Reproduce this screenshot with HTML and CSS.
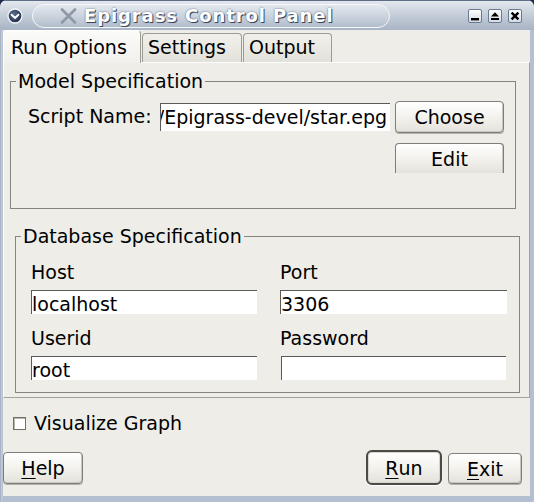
FILE: index.html
```html
<!DOCTYPE html>
<html>
<head>
<meta charset="utf-8">
<title>Epigrass Control Panel</title>
<link rel="stylesheet" href="styles.css">
</head>
<body>
<div class="window">
  <div class="titlebar">
    <span class="menu-btn">
      <svg width="16" height="16" viewBox="0 0 16 16">
        <defs>
          <radialGradient id="mb" cx="0.4" cy="0.35" r="0.7">
            <stop offset="0" stop-color="#5b6c8c"/>
            <stop offset="1" stop-color="#1d2a46"/>
          </radialGradient>
        </defs>
        <circle cx="8" cy="8" r="7" fill="url(#mb)" stroke="#f4f6fa" stroke-width="1.3"/>
        <path d="M4.6 6.8 L8 10 L11.4 6.8" fill="none" stroke="#fff" stroke-width="2" stroke-linecap="round" stroke-linejoin="round"/>
      </svg>
    </span>
    <div class="pill">
      <svg class="x-icon" width="17" height="16" viewBox="0 0 17 16">
        <path d="M2 1.5 L15 14.5 M15 1.5 L2 14.5" stroke="#8e98a6" stroke-width="2.6" stroke-linecap="round"/>
      </svg>
      <span class="title">Epigrass Control Panel</span>
    </div>
    <div class="wm-buttons">
      <span class="wm-btn"><svg width="12" height="12" viewBox="0 0 12 12"><rect x="2" y="8" width="8" height="2.4" fill="#000"/></svg></span>
      <span class="wm-btn"><svg width="12" height="12" viewBox="0 0 12 12"><path d="M6 2.2 L10 6.6 L2 6.6 Z" fill="#000"/><rect x="2" y="8" width="8" height="2" fill="#000"/></svg></span>
      <span class="wm-btn"><svg width="12" height="12" viewBox="0 0 12 12"><path d="M2.6 2.6 L9.4 9.4 M9.4 2.6 L2.6 9.4" stroke="#000" stroke-width="2.4"/></svg></span>
    </div>
  </div>

  <div class="client">
    <div class="tabs">
      <div class="tab active">Run Options</div>
      <div class="tab settings">Settings</div>
      <div class="tab output">Output</div>
    </div>

    <div class="page">
      <fieldset class="group model">
        <legend>Model Specification</legend>
        <div class="script-row">
          <span class="label script-label">Script Name:</span>
          <div class="entry script-entry"><span>/Epigrass-devel/star.epg</span></div>
          <div class="btn-col">
            <div class="btn choose">Choose</div>
            <div class="btn edit">Edit</div>
          </div>
        </div>
      </fieldset>

      <fieldset class="group db">
        <legend>Database Specification</legend>
        <div class="db-grid">
          <div class="field">
            <div class="label">Host</div>
            <div class="entry db-entry">localhost</div>
          </div>
          <div class="field">
            <div class="label">Port</div>
            <div class="entry db-entry">3306</div>
          </div>
          <div class="field">
            <div class="label">Userid</div>
            <div class="entry db-entry">root</div>
          </div>
          <div class="field">
            <div class="label">Password</div>
            <div class="entry db-entry"></div>
          </div>
        </div>
      </fieldset>
    </div>

    <div class="check-row">
      <span class="checkbox"></span>
      <span class="check-label">Visualize Graph</span>
    </div>

    <div class="button-row">
      <div class="btn help"><span class="ul">H</span>elp</div>
      <div class="spacer"></div>
      <div class="btn run"><span class="ul">R</span>un</div>
      <div class="btn exit"><span class="ul">E</span>xit</div>
    </div>
  </div>
</div>
</body>
</html>
```

FILE: styles.css
```css
* {
  box-sizing: border-box;
}

html,
body {
  margin: 0;
  padding: 0;
}

body {
  width: 534px;
  height: 502px;
  overflow: hidden;
  background: #1f2c4c;
  font-family: "DejaVu Sans", sans-serif;
  font-size: 19px;
  line-height: 22px;
  color: #000;
}

.window {
  width: 534px;
  height: 502px;
  display: flex;
  flex-direction: column;
  border-radius: 7px 7px 0 0;
  overflow: hidden;
  background: linear-gradient(to right, #8d9bb0 0, #c3cdda 1px, #b4c0cf 3px);
}

/* ---------- title bar ---------- */
.titlebar {
  height: 30px;
  flex: none;
  display: flex;
  align-items: center;
  background: linear-gradient(#e3e8ee, #c6cfda 45%, #a8b4c4);
  border-top: 1px solid #5d6d86;
}

.menu-btn {
  width: 16px;
  height: 16px;
  margin-left: 7px;
  display: flex;
}

.pill {
  width: 358px;
  height: 24px;
  margin-left: 9px;
  border: 1.5px solid #f5f7fa;
  border-radius: 12px;
  background: linear-gradient(rgba(255, 255, 255, 0.25), rgba(255, 255, 255, 0.05));
  display: flex;
  align-items: center;
  padding-left: 27px;
}

.x-icon {
  flex: none;
}

.title {
  margin-left: 7px;
  font-weight: bold;
  font-size: 18px;
  letter-spacing: 0.9px;
  color: #fff;
  text-shadow: 1px 1px 0 #3c4658, 0 0 2px #56627a;
  white-space: nowrap;
}

.wm-buttons {
  margin-left: auto;
  margin-right: 12px;
  display: flex;
  gap: 6px;
}

.wm-btn {
  width: 14px;
  height: 14px;
  border: 1px solid #6b7a90;
  border-radius: 2px;
  background: linear-gradient(#ffffff, #d4dbe4);
  display: flex;
  align-items: center;
  justify-content: center;
}

/* ---------- client area ---------- */
.client {
  flex: 1;
  margin: 0 4px 6px 3px;
  background: #eeede8;
  display: flex;
  flex-direction: column;
}

.tabs {
  height: 32px;
  flex: none;
  display: flex;
  align-items: flex-end;
}

.tab {
  height: 29px;
  padding: 2px 0 0 5px;
  border: 1px solid #9c9b94;
  border-bottom: none;
  border-radius: 4px 4px 0 0;
  background: linear-gradient(#f1f0eb, #e2e1da);
  white-space: nowrap;
}

.tab.active {
  width: 138px;
  height: 33px;
  padding-top: 5px;
  padding-left: 7px;
  margin-bottom: -1px;
  position: relative;
  background: linear-gradient(#fbfbf9, #f1f0ec);
  border-color: #fff #9c9b94 #9c9b94 #fff;
}

.tab.settings {
  width: 100px;
  margin-left: 1px;
}

.tab.output {
  width: 89px;
  margin-left: 1px;
}

.page {
  height: 336px;
  flex: none;
  border: 1px solid #a2a19a;
  border-top-color: #fdfdfc;
  border-left-color: #fdfdfc;
  padding-top: 7px;
}

/* ---------- group boxes ---------- */
.group {
  margin: 0;
  padding: 0;
  border: 1px solid #85847e;
  min-width: 0;
}

.group legend {
  padding: 0 2px;
  line-height: 22px;
}

.model {
  width: 506px;
  margin-left: 6px;
  padding-bottom: 35px;
}

.model legend {
  margin-left: 5px;
}

.db {
  width: 505px;
  margin-left: 11px;
  margin-top: 16px;
  padding-bottom: 12px;
}

.db legend {
  margin-left: 5px;
}

.script-row {
  display: flex;
  align-items: flex-start;
}

.script-label {
  width: 132px;
  margin-left: 17px;
  margin-top: 13px;
  white-space: nowrap;
}

.entry {
  background: #fff;
  border-top: 1px solid #5a5a5a;
  border-left: 1px solid #5a5a5a;
  padding-top: 1.5px;
  white-space: nowrap;
  overflow: hidden;
}

.script-entry {
  width: 230px;
  height: 28px;
  margin-top: 11px;
  display: flex;
  justify-content: flex-end;
  padding-right: 3px;
}

.script-entry span {
  flex: none;
}

.btn-col {
  width: 109px;
  margin-left: 5px;
  display: flex;
  flex-direction: column;
}

.btn {
  border: 1px solid #7e7d76;
  border-radius: 4px;
  background: linear-gradient(#ffffff, #f3f2ed 50%, #e4e2da);
  box-shadow: inset -1px -1px 0 #c9c7bf, 0 1px 0 #b3b1a9;
  display: flex;
  align-items: center;
  justify-content: center;
  white-space: nowrap;
}

.choose {
  height: 32px;
  margin-top: 9px;
}

.edit {
  height: 30px;
  margin-top: 10px;
  border-bottom: none;
  border-radius: 4px 4px 0 0;
  box-shadow: inset -1px 0 0 #c9c7bf;
}

.db-grid {
  display: grid;
  grid-template-columns: 226px 227px;
  column-gap: 23px;
  padding-left: 15px;
}

.field .label {
  margin-top: 13px;
  height: 22px;
}

.field:nth-child(1) .label,
.field:nth-child(2) .label {
  margin-top: 14px;
}

.db-entry {
  height: 24px;
  margin-top: 7px;
}

.field:nth-child(4) .db-entry {
  width: 225px;
  margin-left: 1px;
}

/* ---------- bottom ---------- */
.check-row {
  display: flex;
  align-items: flex-start;
  margin-top: 14px;
  height: 22px;
}

.checkbox {
  width: 13px;
  height: 13px;
  margin-left: 10px;
  margin-top: 5px;
  border: 1px solid #6f6e68;
  background: #fff;
  box-shadow: inset 1px 1px 0 #b9b8b1;
}

.check-label {
  margin-left: 8px;
}

.button-row {
  display: flex;
  align-items: flex-start;
  margin-top: 16px;
  margin-right: 8px;
}

.spacer {
  flex: 1;
}

.help {
  width: 80px;
  height: 32px;
  margin-top: 2px;
}

.run {
  width: 76px;
  height: 35px;
  border: 2px solid #4b4a46;
  border-radius: 6px;
  box-shadow: inset 0 0 0 1px #d6d4cc, 0 1px 1px #fff;
}

.exit {
  width: 74px;
  height: 31px;
  margin-top: 3px;
  margin-left: 6px;
}

.ul {
  text-decoration: underline;
  text-underline-offset: 3px;
}
```
